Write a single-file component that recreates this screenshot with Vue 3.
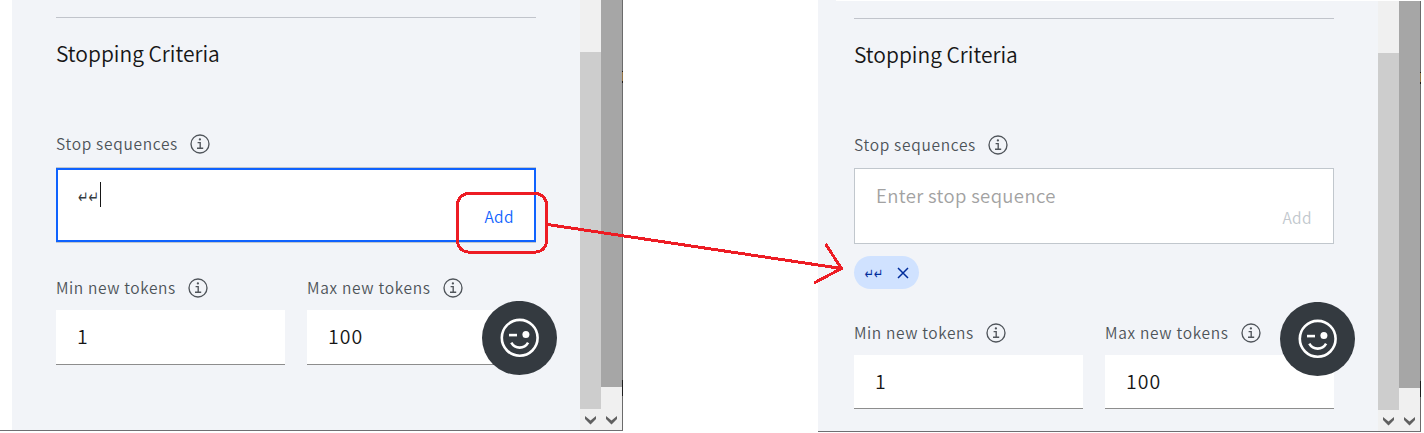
<script setup>
const panels = [
  { id: 'before', focused: true, tags: [] },
  { id: 'after', focused: false, tags: ['↵↵'] },
]
const tokens = [
  { id: 'min', label: 'Min new tokens', value: '1' },
  { id: 'max', label: 'Max new tokens', value: '100' },
]
</script>

<template>
  <main class="stage">
    <section v-for="p in panels" :key="p.id" class="window" :class="p.id">
      <div class="panel">
        <hr class="divider" />
        <h2 class="title"><span class="t-title">Stopping Criteria</span></h2>
        <div class="label">
          <span class="t-stop">Stop sequences</span>
          <svg class="info" viewBox="0 0 20 20"><circle cx="10" cy="10" r="9" /><path d="M7.6 8.6H10.2V14.2M7 14.2H13.2" /><circle class="dot" cx="9.9" cy="5.4" r="1.15" /></svg>
        </div>
        <div class="entry" :class="{ focused: p.focused }">
          <div class="entry-text">
            <template v-if="p.focused"><span class="returns">↵↵</span><i class="caret"></i></template>
            <span v-else class="placeholder">Enter stop sequence</span>
          </div>
          <span class="add">Add</span>
        </div>
        <div v-if="p.tags.length" class="tags">
          <span v-for="t in p.tags" :key="t" class="tag">
            <span class="tag-text">{{ t }}</span>
            <svg class="close" viewBox="0 0 12 12"><path d="M1 1L11 11M11 1L1 11" /></svg>
          </span>
        </div>
        <div class="tokens">
          <div v-for="t in tokens" :key="t.id" class="field">
            <div class="label">
              <span :class="'t-' + t.id">{{ t.label }}</span>
              <svg class="info" viewBox="0 0 20 20"><circle cx="10" cy="10" r="9" /><path d="M7.6 8.6H10.2V14.2M7 14.2H13.2" /><circle class="dot" cx="9.9" cy="5.4" r="1.15" /></svg>
            </div>
            <div class="number"><span>{{ t.value }}</span></div>
          </div>
        </div>
      </div>
      <div class="bar inner">
        <div class="space"></div>
        <div class="thumb"></div>
        <svg class="chev" viewBox="0 0 21 21"><path d="M5 7L10.5 11.5L16 7V10L10.5 15.5L5 10Z" /></svg>
      </div>
      <div class="bar outer">
        <div class="thumb"></div>
        <svg class="chev" viewBox="0 0 21 21"><path d="M5 7L10.5 11.5L16 7V10L10.5 15.5L5 10Z" /></svg>
      </div>
      <div class="edge"><i class="mark"></i><i class="mark low"></i></div>
      <svg class="fab" viewBox="0 0 75 75">
        <ellipse cx="37.5" cy="37" rx="37.5" ry="37.1" fill="#343a40" />
        <g fill="none" stroke="#fff" stroke-width="2.6">
          <circle cx="37.7" cy="36.8" r="17.9" />
          <path d="M27 34.1H35" />
          <path d="M29.3 41.6Q32.2 46.6 37.7 46.6T46.1 41.6" />
        </g>
        <circle cx="43.9" cy="33.4" r="3.5" fill="#fff" />
      </svg>
    </section>
    <svg class="notes" viewBox="0 0 1424 433">
      <rect x="457.5" y="193.5" width="89" height="58.5" rx="11" />
      <path d="M547.5 224.5L841.5 268.5M825.5 244L841.5 268.5L814 283" />
    </svg>
  </main>
</template>

<style>
body { background: #fff; overflow: hidden; }
</style>

<style scoped>
* { box-sizing: border-box; }
.stage {
  position: relative; width: 1424px; height: 433px; display: flex; gap: 195px;
  background: #fff; color: #161616; overflow: hidden;
  font-family: "Noto Sans CJK SC", "Noto Sans", sans-serif; font-weight: 350;
}
.window { position: relative; display: flex; height: 431px; border-bottom: 1px solid #6f6f72; }
.before { width: 623px; padding-left: 12px; }
.after { width: 603px; margin-top: 1px; }
.after::before { content: ""; position: absolute; left: 0; top: -1px; width: 18px; height: 1px; background: #f2f4f8; }
.panel { width: 568px; padding: 17px 44px 0; background: #f2f4f8; }
.after .panel { width: 560px; padding-left: 36px; }
.divider { margin: 0; border: 0; height: 1px; background: #c1c4cb; }
.title { margin: 19px 0 0; height: 32px; line-height: 32px; font-size: 21px; font-weight: 350; letter-spacing: 0; white-space: nowrap; }
.label { display: flex; align-items: center; height: 20px; gap: 12px; font-size: 15.5px; line-height: 20px; color: #4d5358; white-space: nowrap; }
.title + .label { margin-top: 65px; }
.t-title, .t-stop, .t-min, .t-max { display: block; white-space: nowrap; margin-top: -2px; }
.t-title { width: 164px; margin-top: 0; }
.t-stop { width: 122px; letter-spacing: .7px; }
.t-min { width: 120px; letter-spacing: .62px; }
.t-max { width: 124px; letter-spacing: .7px; }
.info { flex: none; width: 20px; height: 20px; fill: none; stroke: #50555b; stroke-width: 1.35; }
.info .dot { fill: #50555b; stroke: none; }
.entry { display: flex; justify-content: space-between; height: 76px; margin-top: 13px; padding: 0 21px; background: #fff; border: 1px solid #c1c7cd; }
.focused { border: 0; padding: 0 22px; border-top: 1px solid #c1c7cd; border-bottom: 1px solid #c1c7cd; box-shadow: inset 0 0 0 2px #0f62fe; }
.entry-text { display: flex; height: 26px; margin-top: 14px; line-height: 26px; font-size: 18.5px; white-space: nowrap; }
.placeholder { color: #a2a2a2; letter-spacing: .36px; margin-top: -1px; }
.returns { color: #343a3f; font: 12.5px/32px "DejaVu Sans", sans-serif; width: 22px; transform: scaleY(1.35); transform-origin: 50% 17px; }
.caret { width: 1px; height: 25px; background: #161616; }
.add { height: 24px; margin-top: 36px; font-size: 15.5px; line-height: 24px; color: #c1c7cd; letter-spacing: .4px; }
.focused .add { color: #0f62fe; }
.tags { display: flex; margin-top: 12px; height: 33px; }
.tag { display: flex; align-items: center; justify-content: space-between; width: 65px; padding: 0 10px 0 10.5px; border-radius: 17px; background: #d0e2ff; }
.tag-text { color: #002d9c; font: 11px/30px "DejaVu Sans", sans-serif; padding-top: 4px; transform: scaleY(1.35); transform-origin: 50% 60%; }
.close { width: 12px; height: 12px; fill: none; stroke: #002d9c; stroke-width: 1.5; }
.tokens { display: flex; gap: 22px; margin-top: 35px; }
.after .tokens { margin-top: 34px; }
.field { width: 229px; }
.number { height: 55px; margin-top: 12px; padding-left: 21px; background: #fff; border-bottom: 1px solid #8d8d8d; font-size: 19.5px; line-height: 52px; letter-spacing: 1px; }
.after .number { height: 54px; }
.bar { display: flex; flex-direction: column; width: 21px; background: #f0f0f0; }
.space { height: 52px; }
.inner .thumb { height: 357px; background: #cdcdcd; }
.outer .thumb { height: 387px; background: #a6a6a6; }
.chev { width: 21px; height: 21px; margin-top: auto; fill: #606060; }
.edge { width: 1px; background: #6b6b6b; padding-top: 71px; }
.mark { display: block; height: 12px; background: #937344; border: solid #201b18; border-width: 1px 0 2px; }
.mark.low { margin-top: 297px; height: 16px; background: #1d1d1d; border: 0; }
.fab { position: absolute; top: 301px; left: 482px; width: 75px; height: 75px; }
.after .fab { left: 462px; }
.notes { position: absolute; inset: 0; width: 1424px; height: 433px; fill: none; stroke: #ed1c24; stroke-width: 3; shape-rendering: crispEdges; }
</style>
